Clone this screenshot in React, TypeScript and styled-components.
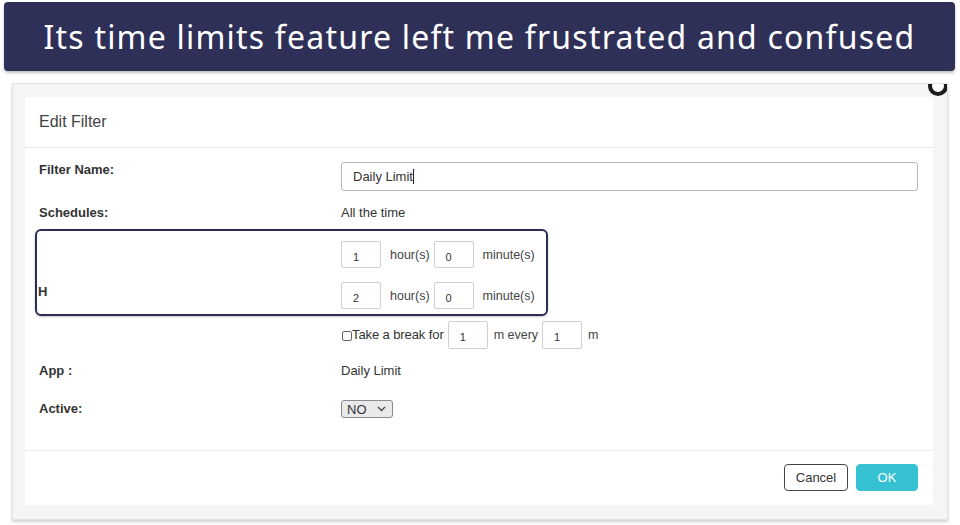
import React from "react";
import styled, { createGlobalStyle } from "styled-components";

const GlobalStyle = createGlobalStyle`
  html, body {
    margin: 0;
    padding: 0;
    background: #ffffff;
  }
  body {
    width: 960px;
    height: 525px;
    overflow: hidden;
    font-family: "Liberation Sans", Arial, sans-serif;
  }
`;

const App = () => {
  return (
    <Page>
      <GlobalStyle />
      <Banner>Its time limits feature left me frustrated and confused</Banner>
      <Frame>
        <CloseBadge />
        <Modal>
          <ModalHeader>Edit Filter</ModalHeader>
          <ModalBody>
            <FormRow $top={14} $align="start">
              <Label>Filter Name:</Label>
              <TextField>
                Daily Limit<Caret />
              </TextField>
            </FormRow>
            <FormRow $top={14}>
              <Label>Schedules:</Label>
              <Value>All the time</Value>
            </FormRow>
            <LimitGroup>
              <GroupRow>
                <GroupLabel />
                <Inline>
                  <SmallInput>1</SmallInput>
                  <Unit>hour(s)</Unit>
                  <SmallInput>0</SmallInput>
                  <Unit>minute(s)</Unit>
                </Inline>
              </GroupRow>
              <GroupRow>
                <GroupLabel>H</GroupLabel>
                <Inline>
                  <SmallInput>2</SmallInput>
                  <Unit>hour(s)</Unit>
                  <SmallInput>0</SmallInput>
                  <Unit>minute(s)</Unit>
                </Inline>
              </GroupRow>
            </LimitGroup>
            <FormRow $top={5}>
              <Label />
              <Inline>
                <CheckBox />
                <BreakText>Take a break for</BreakText>
                <SmallInput $tall>1</SmallInput>
                <Unit $lead={6}>m every</Unit>
                <SmallInput $tall>1</SmallInput>
                <Unit $lead={6}>m</Unit>
              </Inline>
            </FormRow>
            <FormRow $top={14}>
              <Label>App :</Label>
              <Value>Daily Limit</Value>
            </FormRow>
            <FormRow $top={21}>
              <Label>Active:</Label>
              <SelectBox>
                NO
                <svg width="9" height="6" viewBox="0 0 9 6">
                  <path d="M1 1l3.5 3.5L8 1" fill="none" stroke="#444" strokeWidth="1.3" />
                </svg>
              </SelectBox>
            </FormRow>
          </ModalBody>
          <ModalFooter>
            <Button>Cancel</Button>
            <Button $primary>OK</Button>
          </ModalFooter>
        </Modal>
      </Frame>
    </Page>
  );
};

const Page = styled.div`
  width: 960px;
  height: 525px;
  display: flex;
  flex-direction: column;
`;

const Banner = styled.div`
  margin: 2px 5px 0 4px;
  height: 69px;
  background: #2f3058;
  border-radius: 4px;
  box-shadow: 0 2px 3px rgba(0, 0, 0, 0.25);
  color: #ffffff;
  font-family: "Noto Sans", "Open Sans", sans-serif;
  font-size: 32px;
  letter-spacing: 1.2px;
  display: flex;
  align-items: center;
  justify-content: center;
  box-sizing: border-box;
`;

const Frame = styled.div`
  position: relative;
  margin: 12px 12px 0 12px;
  height: 437px;
  background: #f5f5f5;
  border: 1px solid #e2e2e2;
  box-shadow: 0 2px 3px rgba(0, 0, 0, 0.18);
  padding: 13px 14px 14px 12px;
  box-sizing: border-box;
  overflow: hidden;
`;

/* the modal's close button, mostly cut off by the frame edge */
const CloseBadge = styled.div`
  position: absolute;
  top: -8px;
  right: -1px;
  width: 20px;
  height: 20px;
  border-radius: 50%;
  background: #ffffff;
  border: 4px solid #1a1a1a;
  box-sizing: border-box;
`;

const Modal = styled.div`
  background: #ffffff;
  height: 100%;
  display: flex;
  flex-direction: column;
  color: #333333;
`;

const ModalHeader = styled.div`
  height: 51px;
  display: flex;
  align-items: center;
  padding: 0 14px;
  font-size: 16px;
  color: #444444;
  border-bottom: 1px solid #e8e8e8;
  box-sizing: border-box;
`;

const ModalBody = styled.div`
  display: flex;
  flex-direction: column;
  padding: 0 15px 32px 14px;
  border-bottom: 1px solid #ebebeb;
`;

const FormRow = styled.div<{ $top: number; $align?: string }>`
  display: grid;
  grid-template-columns: 302px 1fr;
  align-items: ${(p) => p.$align ?? "center"};
  margin-top: ${(p) => p.$top}px;
`;

const Label = styled.div`
  font-size: 13px;
  line-height: 16px;
  font-weight: bold;
  color: #333333;
`;

const Value = styled.div`
  font-size: 13px;
  line-height: 16px;
  color: #333333;
`;

const BreakText = styled(Value)`
  margin-right: 4px;
  letter-spacing: -0.1px;
`;

const TextField = styled.div`
  height: 29px;
  border: 1px solid #b9b9b9;
  border-radius: 3px;
  box-sizing: border-box;
  padding-left: 11px;
  display: flex;
  align-items: center;
  font-size: 13px;
  color: #333333;
`;

const Caret = styled.span`
  display: inline-block;
  width: 1px;
  height: 15px;
  background: #222222;
`;

const LimitGroup = styled.div`
  margin: 8px 0 0 -4px;
  width: 513px;
  border: 2px solid #2c2d52;
  border-radius: 6px;
  padding: 10px 0 5px 1px;
  box-sizing: border-box;
  display: flex;
  flex-direction: column;
  gap: 14px;
  box-shadow: 0 1px 2px rgba(44, 45, 82, 0.3);
`;

const GroupRow = styled.div`
  display: grid;
  grid-template-columns: 303px 1fr;
  align-items: center;
`;

const GroupLabel = styled(Label)`
  padding-bottom: 8px;
`;

const Inline = styled.div`
  display: flex;
  align-items: center;
`;

const SmallInput = styled.div<{ $tall?: boolean }>`
  width: 40px;
  height: ${(p) => (p.$tall ? 28 : 27)}px;
  border: 1px solid #d0d0d0;
  border-radius: 2px;
  box-sizing: border-box;
  padding: 4px 0 0 11px;
  display: flex;
  align-items: center;
  font-size: 11px;
  color: #333333;
`;

const Unit = styled.span<{ $lead?: number }>`
  font-size: 12.5px;
  color: #444444;
  margin: 0 4px 0 ${(p) => p.$lead ?? 9}px;
`;

const CheckBox = styled.span`
  width: 8px;
  height: 8px;
  border: 1px solid #666666;
  border-radius: 2px;
  margin: 1px 0 0 1px;
`;

const SelectBox = styled.div`
  width: 52px;
  height: 18px;
  background: #e9e9ec;
  border: 1px solid #8a8a8a;
  border-radius: 3px;
  box-sizing: border-box;
  display: flex;
  align-items: center;
  justify-content: space-between;
  padding: 0 6px 0 5px;
  font-size: 13px;
  color: #333333;
`;

const ModalFooter = styled.div`
  flex: 1;
  display: flex;
  justify-content: flex-end;
  align-items: flex-start;
  gap: 8px;
  padding: 13px 15px 0 0;
`;

const Button = styled.div<{ $primary?: boolean }>`
  height: 27px;
  width: ${(p) => (p.$primary ? 62 : 64)}px;
  box-sizing: border-box;
  border-radius: 4px;
  display: flex;
  align-items: center;
  justify-content: center;
  font-size: 13px;
  color: ${(p) => (p.$primary ? "#ffffff" : "#333333")};
  background: ${(p) => (p.$primary ? "#36c1d3" : "#ffffff")};
  border: 1px solid ${(p) => (p.$primary ? "#36c1d3" : "#444444")};
`;

export default App;
